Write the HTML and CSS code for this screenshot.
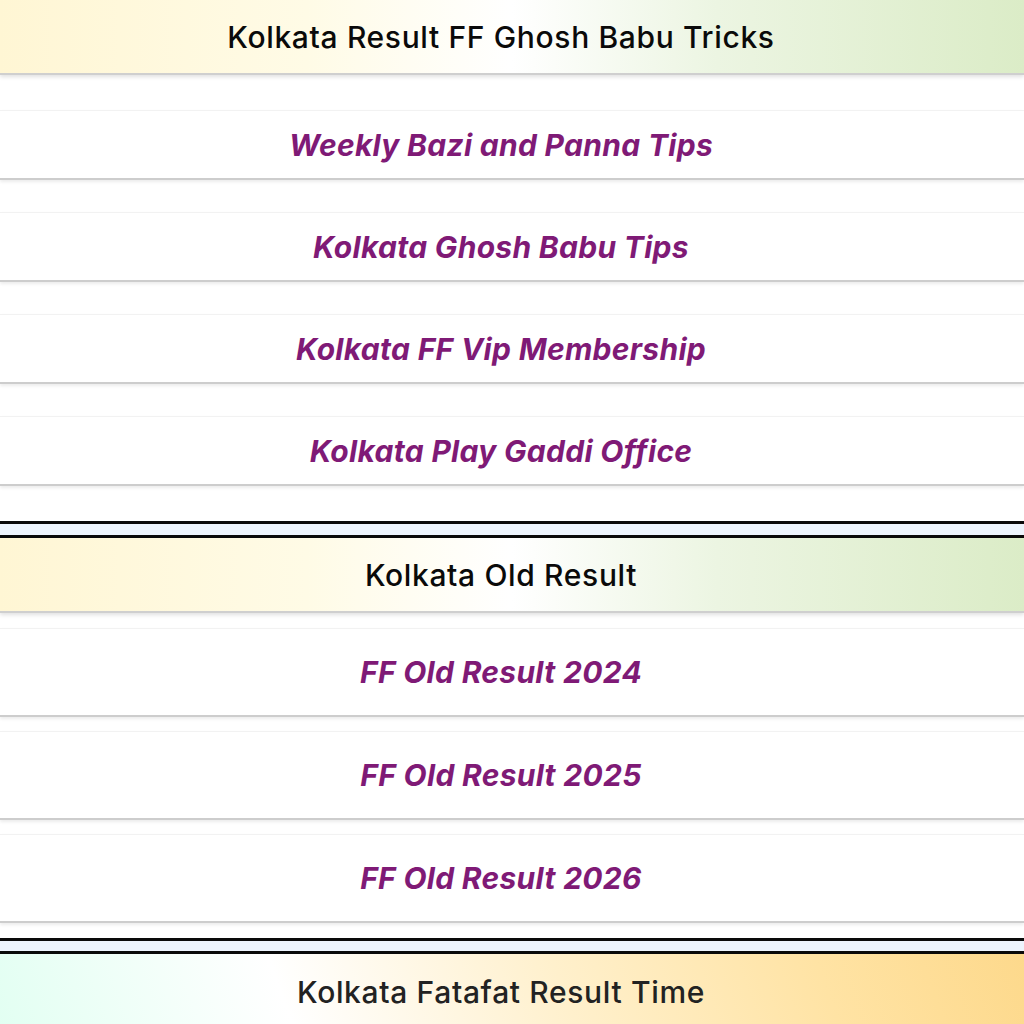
FILE: index.html
```html
<!DOCTYPE html>
<html lang="en">
<head>
<meta charset="utf-8">
<title>Kolkata Result FF</title>
<link rel="stylesheet" href="styles.css">
</head>
<body>
<section class="block">
  <h2 class="head head-green">Kolkata Result FF Ghosh Babu Tricks</h2>
  <div class="links links-tips">
    <a class="link-box" href="#">Weekly Bazi and Panna Tips</a>
    <a class="link-box" href="#">Kolkata Ghosh Babu Tips</a>
    <a class="link-box" href="#">Kolkata FF Vip Membership</a>
    <a class="link-box" href="#">Kolkata Play Gaddi Office</a>
  </div>
</section>
<div class="divider"></div>
<section class="block">
  <h2 class="head head-green">Kolkata Old Result</h2>
  <div class="links links-old">
    <a class="link-box tall" href="#">FF Old Result 2024</a>
    <a class="link-box tall" href="#">FF Old Result 2025</a>
    <a class="link-box tall" href="#">FF Old Result 2026</a>
  </div>
</section>
<div class="divider divider-thin"></div>
<section class="block">
  <h2 class="head head-orange">Kolkata Fatafat Result Time</h2>
</section>
</body>
</html>
```

FILE: styles.css
```css
html, body {
  margin: 0;
  padding: 0;
  background: #ffffff;
}
body {
  font-family: "Inter", "Noto Sans", "Liberation Sans", sans-serif;
}
.block {
  display: flex;
  flex-direction: column;
}
.head {
  margin: 0;
  height: 73px;
  padding-right: 22px;
  display: flex;
  align-items: center;
  justify-content: center;
  font-size: 30px;
  font-weight: 500;
  color: #0a0a0a;
  letter-spacing: 0.65px;
  border-bottom: 2px solid #cfcfcf;
  box-shadow: 0 2px 4px rgba(0, 0, 0, 0.12);
  position: relative;
  z-index: 1;
}
.head-green {
  background: linear-gradient(to right, #fff6d4 0%, #fffbe6 30%, #ffffff 50%, #ecf5e2 70%, #dbecc7 100%);
}
.block + .block .head-green {
  height: 74px;
}
.head-orange {
  height: 76px;
  color: #222222;
  border-bottom: none;
  box-shadow: none;
  background: linear-gradient(70deg, #e2fff2 0%, #ffffff 28%, #fff0cc 55%, #ffe3a4 80%, #fdd98c 100%);
}
.links {
  display: flex;
  flex-direction: column;
}
.links-tips {
  padding: 35px 0 35px;
  gap: 32px;
}
.links-old {
  padding: 15px 0 15px;
  gap: 14px;
}
.link-box {
  display: flex;
  align-items: center;
  justify-content: center;
  height: 67px;
  padding-right: 22px;
  border-top: 1px solid #f2f2f2;
  border-bottom: 2px solid #cdcdcd;
  box-shadow: 0 2px 3px rgba(0, 0, 0, 0.08);
  font-size: 30px;
  font-style: italic;
  font-weight: 700;
  letter-spacing: 0.3px;
  color: #7f1a76;
  text-decoration: none;
}
.link-box.tall {
  height: 86px;
}
.divider {
  height: 11px;
  background: #edf4fd;
  border-top: 3px solid #0a0a0a;
  border-bottom: 3px solid #0a0a0a;
}
.divider-thin {
  height: 10px;
}
```
